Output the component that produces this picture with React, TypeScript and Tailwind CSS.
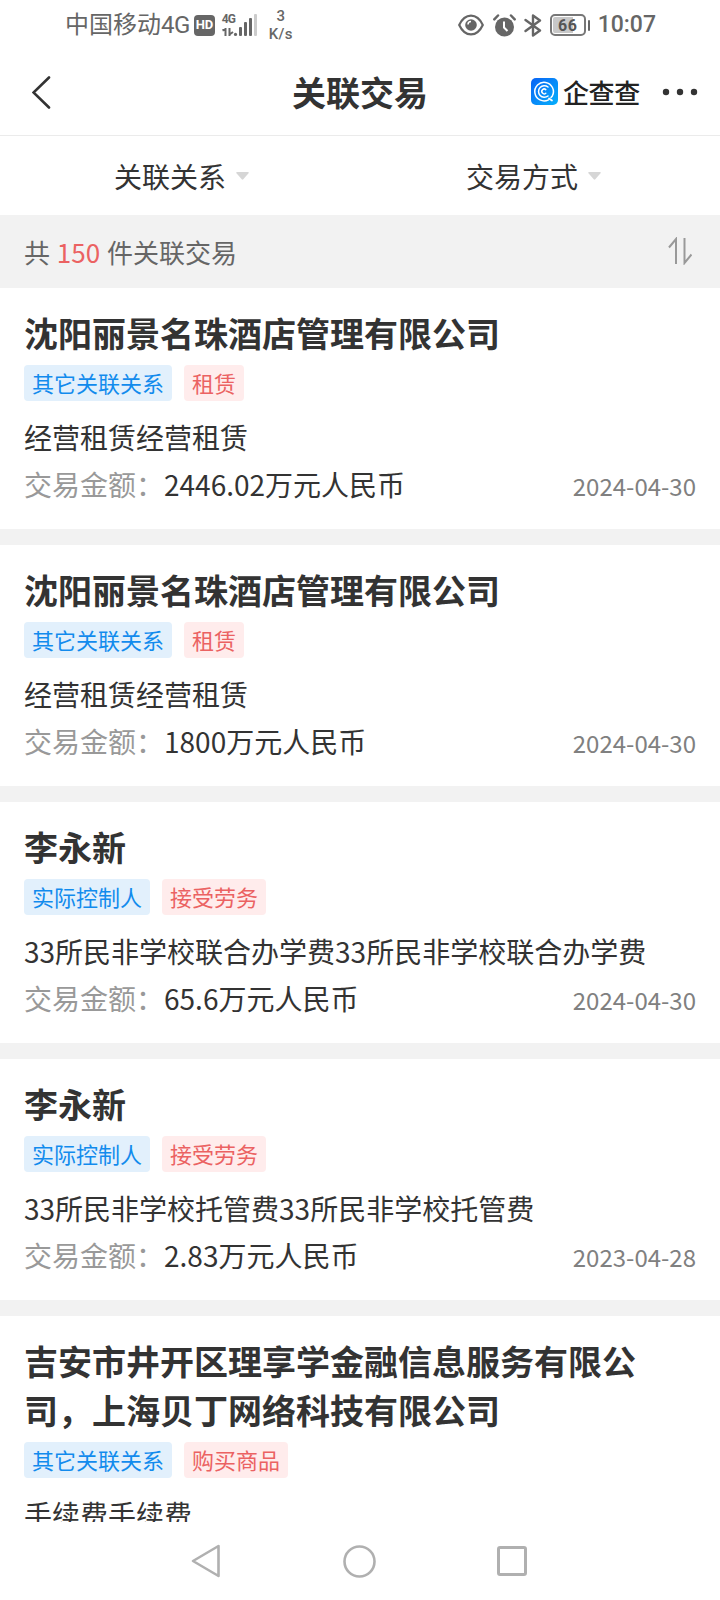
import React from 'react';

interface Transaction {
  name: string;
  relation: string;
  type: string;
  description: string;
  amount: string;
  date: string;
}

const transactions: Transaction[] = [
  { name: '沈阳丽景名珠酒店管理有限公司', relation: '其它关联关系', type: '租赁', description: '经营租赁经营租赁', amount: '2446.02万元人民币', date: '2024-04-30' },
  { name: '沈阳丽景名珠酒店管理有限公司', relation: '其它关联关系', type: '租赁', description: '经营租赁经营租赁', amount: '1800万元人民币', date: '2024-04-30' },
  { name: '李永新', relation: '实际控制人', type: '接受劳务', description: '33所民非学校联合办学费33所民非学校联合办学费', amount: '65.6万元人民币', date: '2024-04-30' },
  { name: '李永新', relation: '实际控制人', type: '接受劳务', description: '33所民非学校托管费33所民非学校托管费', amount: '2.83万元人民币', date: '2023-04-28' },
  { name: '吉安市井开区理享学金融信息服务有限公司，上海贝丁网络科技有限公司', relation: '其它关联关系', type: '购买商品', description: '手续费手续费', amount: '', date: '' },
];

const StatusBar: React.FC = () => (
  <div className="flex h-12 shrink-0 items-center justify-between pl-[65px] pr-[64px] pt-[2px] font-[Roboto,'Noto_Sans_CJK_SC',sans-serif] text-[#666]">
    <div className="flex items-center">
      <span className="text-[24px] leading-[46px]">中国移动<span className="tracking-[-0.5px]">4G</span></span>
      <span className="ml-[4px] flex h-[21px] w-[21px] items-center justify-center rounded-[4px] bg-[#666] text-[13px] font-bold tracking-tight text-white">HD</span>
      <div className="ml-[7px] flex items-end">
        <div className="flex h-[22px] w-[17px] flex-col justify-between">
          <span className="text-[12px] font-bold leading-[11px] tracking-[-1px]">4G</span>
          <svg width="16" height="8" viewBox="0 0 16 8" fill="none" stroke="currentColor" strokeWidth="2">
            <path d="M0.5 2.500 3.500 1M3.500 0v8M7.500 0v8M7.500 6.500 11 4" />
            <circle cx="13.500" cy="6.400" r="1.600" fill="currentColor" stroke="none" />
          </svg>
        </div>
        <svg width="18" height="22" viewBox="0 0 18 22" fill="#666">
          <rect x="0" y="13" width="3" height="9" rx="1" />
          <rect x="5" y="8" width="3" height="14" rx="1" />
          <rect x="10" y="4" width="3" height="18" rx="1" />
          <rect x="15" y="0" width="3" height="22" rx="1" fill="#ccc" />
        </svg>
      </div>
      <div className="ml-[12px] flex flex-col items-center text-[15px] font-medium leading-[18px] tracking-[0.3px]">
        <span className="-mt-px">3</span>
        <span>K/s</span>
      </div>
    </div>
    <div className="flex items-center">
      <svg width="26" height="22" viewBox="0 0 26 22" fill="none" stroke="currentColor" strokeWidth="2.200">
        <path d="M1.200 11C7-1.500 19-1.500 24.800 11C19 23.500 7 23.500 1.200 11Z" strokeLinejoin="round" />
        <circle cx="13" cy="11" r="5.800" fill="currentColor" stroke="none" />
        <path d="M10 10.500a3 3 0 0 1 3-3" stroke="#fff" strokeWidth="1.500" />
      </svg>
      <svg className="ml-[9px]" width="23" height="23" viewBox="0 0 23 23" fill="none">
        <circle cx="11.500" cy="13" r="9.500" fill="#666" />
        <path d="M11 7.500v6l3.500 3.500" stroke="#fff" strokeWidth="2" />
        <path d="M1.300 5.300 5 1.500M21.700 5.300 18 1.500" stroke="#666" strokeWidth="2.500" strokeLinecap="round" />
      </svg>
      <svg className="ml-[8px]" width="18" height="23" viewBox="0 0 18 23" fill="none" stroke="currentColor" strokeWidth="2.400" strokeLinejoin="round" strokeLinecap="round">
        <path d="M1.500 6 16 16.500 9 21.500V1.500l7 5L1.500 17" />
      </svg>
      <div className="ml-[8px] flex h-[22px] w-[36px] rounded-[5px] border-2 border-[#777] p-px">
        <div className="h-full w-full rounded-[2px] bg-[linear-gradient(90deg,#c8c8c8_66%,transparent_66%)] text-center text-[16px] font-bold leading-[17px] tracking-[0.5px] text-[#555]">66</div>
      </div>
      <div className="ml-[2px] h-[11px] w-[2px] rounded-full bg-[#666]" />
      <span className="ml-[8px] text-[23px] font-medium leading-[46px]">10:07</span>
    </div>
  </div>
);

const QccLogo: React.FC = () => (
  <svg width="27" height="27" viewBox="0 0 27 27" fill="none">
    <defs>
      <linearGradient id="qcc" x1="0" y1="0" x2="1" y2="1">
        <stop offset="0" stopColor="#0a63f5" />
        <stop offset="1" stopColor="#05b0fb" />
      </linearGradient>
    </defs>
    <rect width="27" height="27" rx="5" fill="url(#qcc)" />
    <g stroke="#fff" strokeLinecap="round">
      <path d="M17.500 21.800A9.300 9.300 0 1 1 21.300 18L20 19.500" strokeWidth="1.500" />
      <path d="M17 18a5.800 5.800 0 1 1 0-9" strokeWidth="1.500" />
      <path d="M14.800 15.200a2.400 2.400 0 1 1 0-3.600" strokeWidth="1.500" />
      <path d="M18 20.500 21 22.500" strokeWidth="1.700" />
    </g>
  </svg>
);

const Header: React.FC = () => (
  <div className="grid h-[88px] shrink-0 grid-cols-[1fr_auto_1fr] items-center border-b border-[#ebebeb]">
    <svg className="ml-8 mt-px" width="19" height="33" viewBox="0 0 19 33" fill="none" stroke="#333" strokeWidth="2.600" strokeLinecap="round">
      <path d="M17 1.500 1.500 16.500 17 31.500" />
    </svg>
    <h1 className="text-[34px] font-bold">关联交易</h1>
    <div className="flex items-center justify-end pr-[22px]">
      <QccLogo />
      <span className="ml-[5px] text-[26px] font-medium leading-9 tracking-[-0.3px] text-[#222]">企查查</span>
      <svg className="ml-[22px]" width="36" height="8" viewBox="0 0 36 8" fill="#333">
        <circle cx="4" cy="4" r="3.200" />
        <circle cx="18" cy="4" r="3.200" />
        <circle cx="32" cy="4" r="3.200" />
      </svg>
    </div>
  </div>
);

const Filter: React.FC<{ label: string }> = ({ label }) => (
  <div className="flex items-center gap-[10px] text-[28px]">
    {label}
    <svg width="13" height="8" viewBox="0 0 13 8" fill="#d6d6d6">
      <path d="M1 0h11q1.500 0 .5 1.200L7.300 7.300q-.8.900-1.600 0L.5 1.200Q-.5 0 1 0Z" />
    </svg>
  </div>
);

const TransactionCard: React.FC<{ item: Transaction }> = ({ item }) => (
  <div className="h-[241px] shrink-0 bg-white px-6 pt-5">
    <h2 className="text-[34px] font-bold leading-[49px]">{item.name}</h2>
    <div className="mt-2 flex gap-3 text-[22px] leading-[34px]">
      <span className="rounded-[4px] bg-[#e2f0fc] px-2 pb-[2px] text-[#128bed]">{item.relation}</span>
      <span className="rounded-[4px] bg-[#ffecec] px-2 pb-[2px] text-[#eb6262]">{item.type}</span>
    </div>
    <p className="mt-3 whitespace-nowrap text-[28px] leading-12">{item.description}</p>
    {item.amount && (
      <div className="flex items-start justify-between text-[28px] leading-[47px]">
        <div>
          <span className="text-[#999]">交易金额：</span>
          {item.amount}
        </div>
        <span className="mt-px text-[24px] leading-12 text-[#808080]">{item.date}</span>
      </div>
    )}
  </div>
);

const NavBar: React.FC = () => (
  <div className="flex h-[78px] shrink-0 items-center justify-between bg-white pl-[191px] pr-[193px] text-[#b0b0b0]">
    <svg width="31" height="34" viewBox="0 0 31 34" fill="none" stroke="currentColor" strokeWidth="2.600" strokeLinejoin="round">
      <path d="M27.500 2v30L2 17Z" />
    </svg>
    <svg width="33" height="33" viewBox="0 0 33 33" fill="none" stroke="currentColor" strokeWidth="2.600">
      <circle cx="16.500" cy="16.500" r="15" />
    </svg>
    <div className="h-[30px] w-[30px] rounded-[3px] border-3 border-current" />
  </div>
);

const App: React.FC = () => {
  return (
    <div className="flex h-[1600px] w-[720px] flex-col overflow-hidden bg-white font-['Noto_Sans_CJK_SC',sans-serif] text-[#333]">
      <StatusBar />
      <Header />
      <div className="flex h-[79px] shrink-0 items-center justify-between pl-[114px] pr-[119px]">
        <Filter label="关联关系" />
        <Filter label="交易方式" />
      </div>
      <div className="flex h-[73px] shrink-0 items-center justify-between bg-[#f2f2f2] px-6 text-[26px] text-[#666]">
        <span className="[word-spacing:1px]">共 <span className="text-[#eb6262]">150</span> 件关联交易</span>
        <svg className="mb-[2px] mr-[4px]" width="24" height="28" viewBox="0 0 24 28" fill="none" stroke="#999" strokeWidth="2">
          <path d="M1 10.500 8 2v25M16.500 1v25L23.500 17.500" />
        </svg>
      </div>
      <div className="flex min-h-0 flex-1 flex-col gap-4 overflow-hidden bg-[#f2f2f2]">
        {transactions.map((item, index) => (
          <TransactionCard key={index} item={item} />
        ))}
      </div>
      <NavBar />
    </div>
  );
};

export default App;
